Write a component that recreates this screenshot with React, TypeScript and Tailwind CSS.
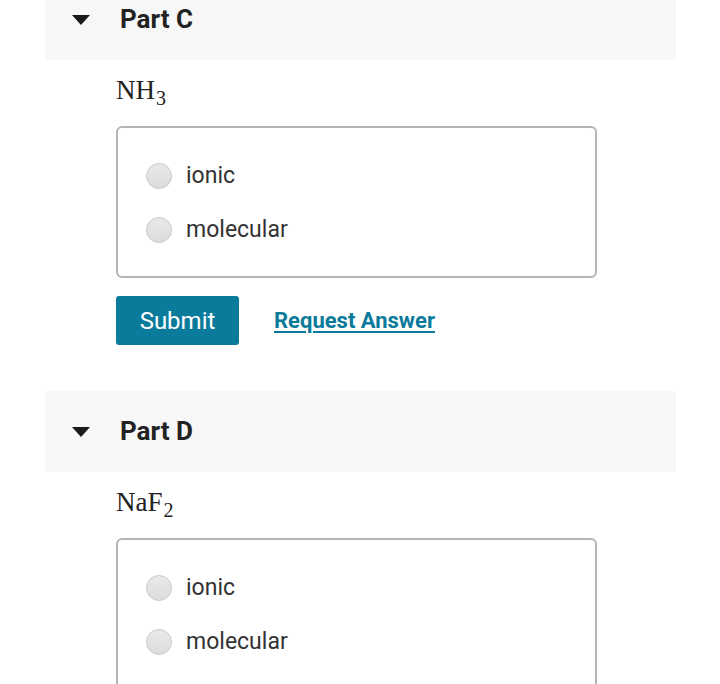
import React from "react";

function Radio({ label }: { label: string }) {
  return (
    <label className="flex items-center h-[54px]">
      <span className="w-[26px] h-[26px] rounded-full border border-[#c9c9c9] bg-[linear-gradient(#e9e9e9,#dcdcdc)] shrink-0" />
      <span className="ml-[14px] text-[23px] text-[#333333]">{label}</span>
    </label>
  );
}

function Part({
  title,
  formula,
  showButtons,
  first,
}: {
  title: string;
  formula: React.ReactNode;
  showButtons: boolean;
  first?: boolean;
}) {
  return (
    <div>
      <div className={`h-[81px] bg-[#f7f7f7] flex items-center ${first ? "mt-[-21px]" : ""}`}>
        <svg width="18" height="10" viewBox="0 0 18 10" className="ml-[27px]">
          <polygon points="0,0 18,0 9,10" fill="#1a1a1a" />
        </svg>
        <span className="ml-[30px] text-[26px] font-bold text-[#222222]">{title}</span>
      </div>
      <div className="pl-[71px]">
        <div className="mt-[10px] h-[40px] flex items-center text-[27px] text-[#222222] font-['Liberation_Serif',serif]">
          {formula}
        </div>
        <div className="mt-[16px] w-[481px] border-2 border-[#b5b5b5] rounded-[6px] pt-[21px] pb-[19px] pl-[28px]">
          <Radio label="ionic" />
          <Radio label="molecular" />
        </div>
        {showButtons && (
          <div className="mt-[18px] flex items-center">
            <button className="w-[123px] h-[49px] bg-[#0b7b9c] text-white text-[24px] rounded-[3px]">
              Submit
            </button>
            <a className="ml-[35px] text-[22px] font-bold text-[#0b7a9a] underline decoration-2 underline-offset-[3px]">
              Request Answer
            </a>
          </div>
        )}
      </div>
    </div>
  );
}

export default function App() {
  return (
    <div className="w-[720px] h-[684px] overflow-hidden bg-white font-['Roboto',sans-serif]">
      <div className="ml-[45px] w-[631px]">
        <Part
          first
          title="Part C"
          formula={
            <span>
              NH<sub className="text-[20px] bottom-[-6px] ml-[1px]">3</sub>
            </span>
          }
          showButtons
        />
        <div className="h-[46px]" />
        <Part
          title="Part D"
          formula={
            <span>
              NaF<sub className="text-[20px] bottom-[-6px] ml-[1px]">2</sub>
            </span>
          }
          showButtons={false}
        />
      </div>
    </div>
  );
}
